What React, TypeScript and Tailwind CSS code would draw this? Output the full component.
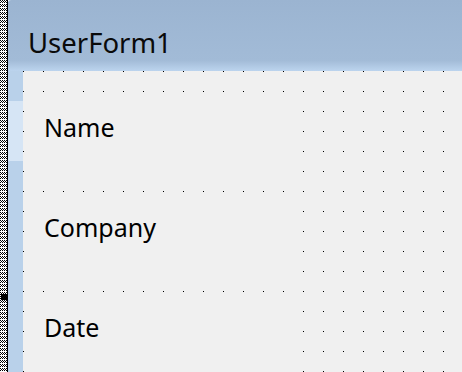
import React from 'react';

const labels = ['Name', 'Company', 'Date'];

export default function App() {
  return (
    <div className="relative flex h-[372px] w-[462px] overflow-hidden bg-white" style={{ fontFamily: '"Noto Sans", "Open Sans", sans-serif' }}>
      {/* hatched selection border */}
      <div className="w-[7px] bg-white bg-[conic-gradient(at_1px_1px,transparent_75%,#000_0),conic-gradient(at_1px_1px,transparent_75%,#000_0)] bg-[length:2px_2px,2px_4px] bg-[position:0_0,1px_1px]" />
      <div className="w-px bg-black" />
      <div className="absolute left-[1px] top-[294px] h-[6px] w-[6px] bg-black" />

      {/* form window */}
      <div className="flex flex-1 flex-col overflow-hidden rounded-tl-[3px]">
        <div className="h-[71px] shrink-0 bg-linear-to-b from-[#9bb4d1] via-[#a2bbd7] via-85% to-[#bcd4ee] pl-[20px] pt-[25px]">
          <span className="block text-[27.5px] leading-[36px] text-[#0a0a0a]">UserForm1</span>
        </div>

        <div className="flex flex-1">
          <div className="flex w-[15px] shrink-0 flex-col bg-[#b9d1ea]">
            <div className="h-[30px]" />
            <div className="h-[60px] bg-[#d6e5f5]" />
          </div>

          <div className="flex flex-1 flex-col bg-[#f0f0f0] bg-[conic-gradient(at_1px_1px,transparent_75%,#000_0)] bg-[length:20px_20px] pt-[30px]">
            {labels.map((l) => (
              <div key={l} className="mb-[20px] ml-[10px] h-[80px] w-[260px] shrink-0 bg-[#f0f0f0] pl-[11px] pt-[9px]">
                <span className="block text-[25px] leading-[34px] text-black">{l}</span>
              </div>
            ))}
          </div>
        </div>
      </div>
    </div>
  );
}
